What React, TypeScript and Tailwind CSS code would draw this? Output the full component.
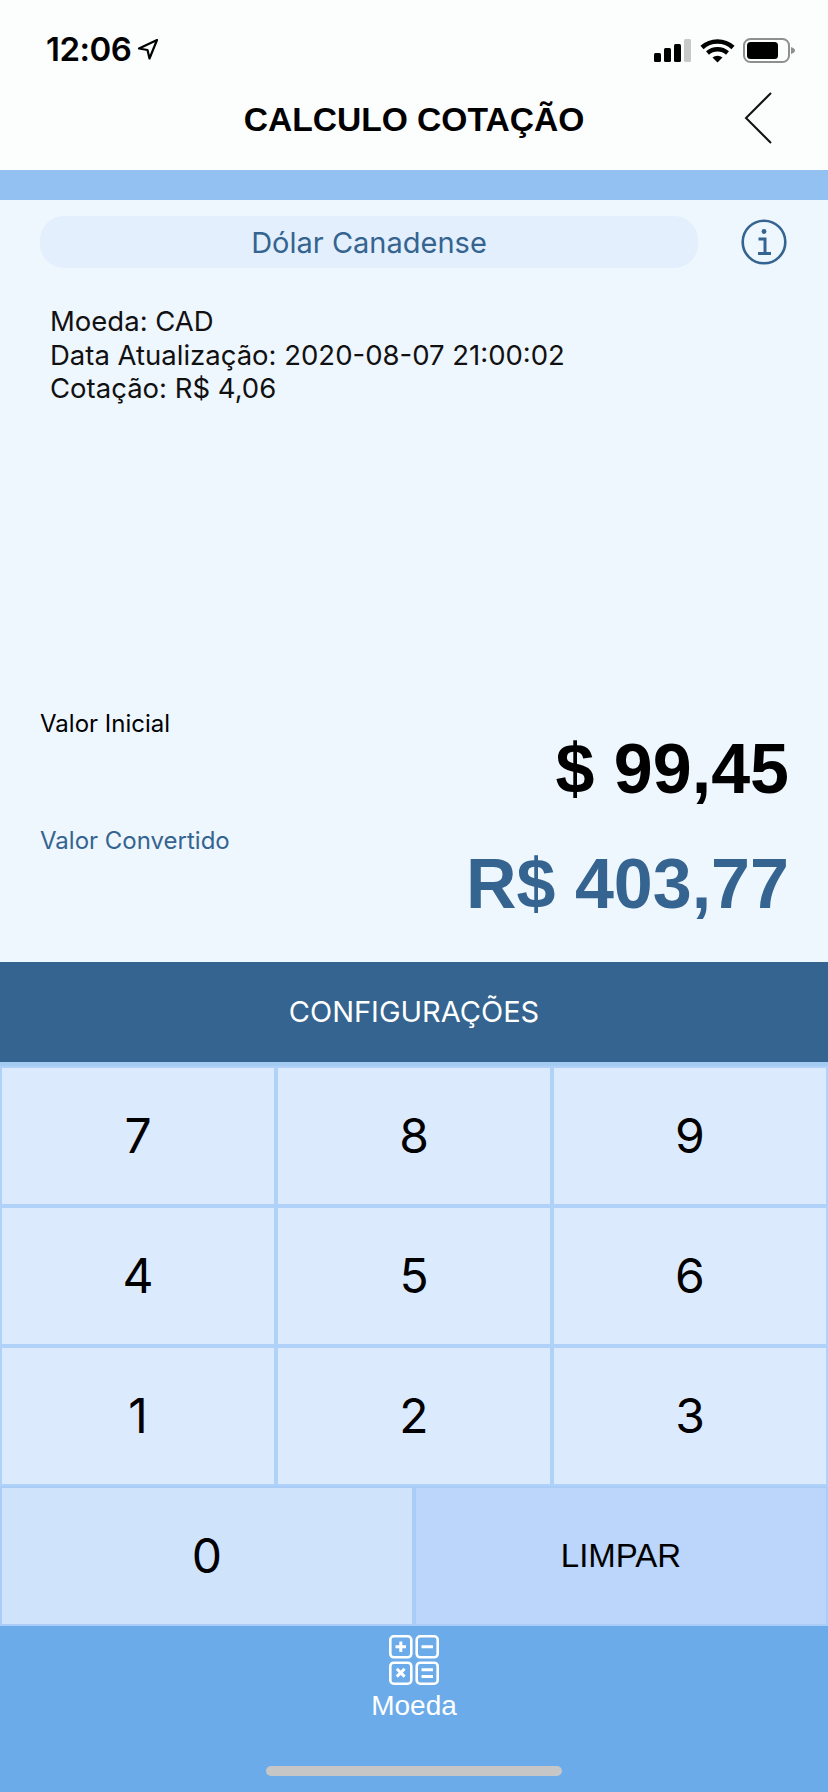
const digitRows = [
  ['7', '8', '9'],
  ['4', '5', '6'],
  ['1', '2', '3'],
];

const KeyCell = ({ label, className }: { label: string; className: string }) => (
  <button
    type="button"
    className={`flex h-[140px] items-center justify-center border-2 text-black ${className}`}
  >
    {label}
  </button>
);

const StatusIcons = () => (
  <svg width="142" height="26" viewBox="0 0 142 26" className="block">
    <rect x="0" y="15" width="7" height="9" rx="1.5" fill="#000" />
    <rect x="10" y="10" width="7" height="14" rx="1.5" fill="#000" />
    <rect x="20" y="6" width="7" height="18" rx="1.5" fill="#000" />
    <rect x="30" y="1" width="7" height="23" rx="1.5" fill="#c8c8c8" />
    <path d="M48 9.5a23 23 0 0 1 31 0" fill="none" stroke="#000" strokeWidth="4.6" strokeLinecap="butt" />
    <path d="M53.5 15a15 15 0 0 1 20 0" fill="none" stroke="#000" strokeWidth="4.4" />
    <path d="M58.5 19.6a7.5 7.5 0 0 1 10 0L63.5 24.6Z" fill="#000" />
    <rect x="90" y="1" width="45" height="23" rx="6.5" fill="none" stroke="#8f8f8f" strokeWidth="2" />
    <rect x="93" y="4" width="31" height="17" rx="3.5" fill="#000" />
    <path d="M137 9c2.6.7 4 2 4 3.5s-1.400 2.800-4 3.500Z" fill="#8f8f8f" />
  </svg>
);

const CalculatorIcon = () => (
  <svg width="50" height="50" viewBox="0 0 50 50" fill="none" stroke="#fff" strokeWidth="2.6" className="block">
    <rect x="1.300" y="1.300" width="21" height="21" rx="3.500" />
    <rect x="27.700" y="1.300" width="21" height="21" rx="3.500" />
    <rect x="1.300" y="27.700" width="21" height="21" rx="3.500" />
    <rect x="27.700" y="27.700" width="21" height="21" rx="3.500" />
    <path d="M6.500 11.800h10.500M11.800 6.500v10.500M32.500 11.800h11.500M7.800 33.800l7.800 7.800M15.600 33.800l-7.800 7.800M32.500 34.800h11.500M32.500 41.500h11.500" strokeWidth="3" />
  </svg>
);

export default function App() {
  return (
    <div className="flex h-[1792px] w-[828px] flex-col overflow-hidden bg-[#eef6fe] font-['Inter',sans-serif]">
      <header className="h-[170px] shrink-0 bg-[#fcfdfd]">
        <div className="flex h-[92px] items-start justify-between pl-[46px] pr-[32px] pt-[31px]">
          <div className="flex items-center gap-[6px]">
            <span className="text-[33px] font-semibold leading-[36px] tracking-[-0.5px] text-black">12:06</span>
            <svg width="22" height="22" viewBox="0 0 22 22" fill="none" stroke="#000" strokeWidth="2.200" strokeLinejoin="round">
              <path d="M20 2 2 10.500l8.500 1.500 2 8.500Z" />
            </svg>
          </div>
          <div className="pt-[7px]">
            <StatusIcons />
          </div>
        </div>
        <div className="relative flex h-[50px] items-center justify-center pt-[6px]">
          <h1 className="font-['Liberation_Sans',sans-serif] text-[33.600px] font-bold leading-[40px] text-black">CALCULO COTAÇÃO</h1>
          <svg width="30" height="52" viewBox="0 0 30 52" fill="none" stroke="#111" strokeWidth="2" className="absolute right-[54px] top-0">
            <path d="M27 1 2 26l25 25" />
          </svg>
        </div>
      </header>

      <div className="h-[30px] shrink-0 bg-[#93c1f1]" />

      <main className="flex h-[762px] shrink-0 flex-col pl-[40px] pr-[40px]">
        <div className="mt-[16px] flex items-center">
          <div className="flex h-[52px] w-[658px] items-center justify-center rounded-[24px] bg-[#e3effd] pt-[2px] text-[29px] text-[#34648f]">
            Dólar Canadense
          </div>
          <svg width="46" height="46" viewBox="0 0 46 46" fill="none" stroke="#34648f" strokeWidth="2.600" className="ml-[43px]">
            <circle cx="23" cy="23" r="21.300" />
            <circle cx="23" cy="12.500" r="2.400" fill="#34648f" stroke="none" />
            <path d="M17.500 20h6.500v14M17 34.500h13" strokeWidth="3" />
          </svg>
        </div>

        <div className="mt-[37px] pl-[10px] text-[27.500px] leading-[33.500px] text-[#111]">
          <p>Moeda: CAD</p>
          <p>Data Atualização: 2020-08-07 21:00:02</p>
          <p>Cotação: R$ 4,06</p>
        </div>

        <div className="mt-[304px] text-[24px] leading-[28px] text-black">Valor Inicial</div>
        <div className="mr-[-1px] mt-[-9px] text-right font-['Liberation_Sans',sans-serif] text-[70px] font-bold leading-[80px] text-black">
          $ 99,45
        </div>
        <div className="mt-[18px] text-[24px] leading-[28px] text-[#34648f]">Valor Convertido</div>
        <div className="mr-[-1px] mt-[-11px] text-right font-['Liberation_Sans',sans-serif] text-[70px] font-bold leading-[80px] text-[#34648f]">
          R$ 403,77
        </div>
      </main>

      <button type="button" className="flex h-[100px] shrink-0 items-center justify-center bg-[#34648f] text-[29px] text-white">
        CONFIGURAÇÕES
      </button>
      <div className="h-[4px] shrink-0 bg-[#a4cbf2]" />

      <section className="shrink-0 text-[48px]">
        {digitRows.map((row) => (
          <div key={row[0]} className="grid grid-cols-3">
            {row.map((digit) => (
              <KeyCell key={digit} label={digit} className="border-[#b1d2f8] bg-[#dceafd]" />
            ))}
          </div>
        ))}
        <div className="grid grid-cols-2">
          <KeyCell label="0" className="border-[#a9cdf6] bg-[#cfe3fb]" />
          <KeyCell label="LIMPAR" className="border-[#a9cdf6] bg-[#bbd5fb] font-['Liberation_Sans',sans-serif] text-[33px]" />
        </div>
      </section>

      <nav className="relative flex flex-1 flex-col items-center bg-[#6babe9] pt-[9px] text-white">
        <CalculatorIcon />
        <span className="mt-[4px] font-['Liberation_Sans',sans-serif] text-[28px] leading-[34px]">Moeda</span>
        <div className="absolute bottom-[16px] left-[266px] h-[10px] w-[296px] rounded-full bg-[#c6c6c6]" />
      </nav>
    </div>
  );
}
